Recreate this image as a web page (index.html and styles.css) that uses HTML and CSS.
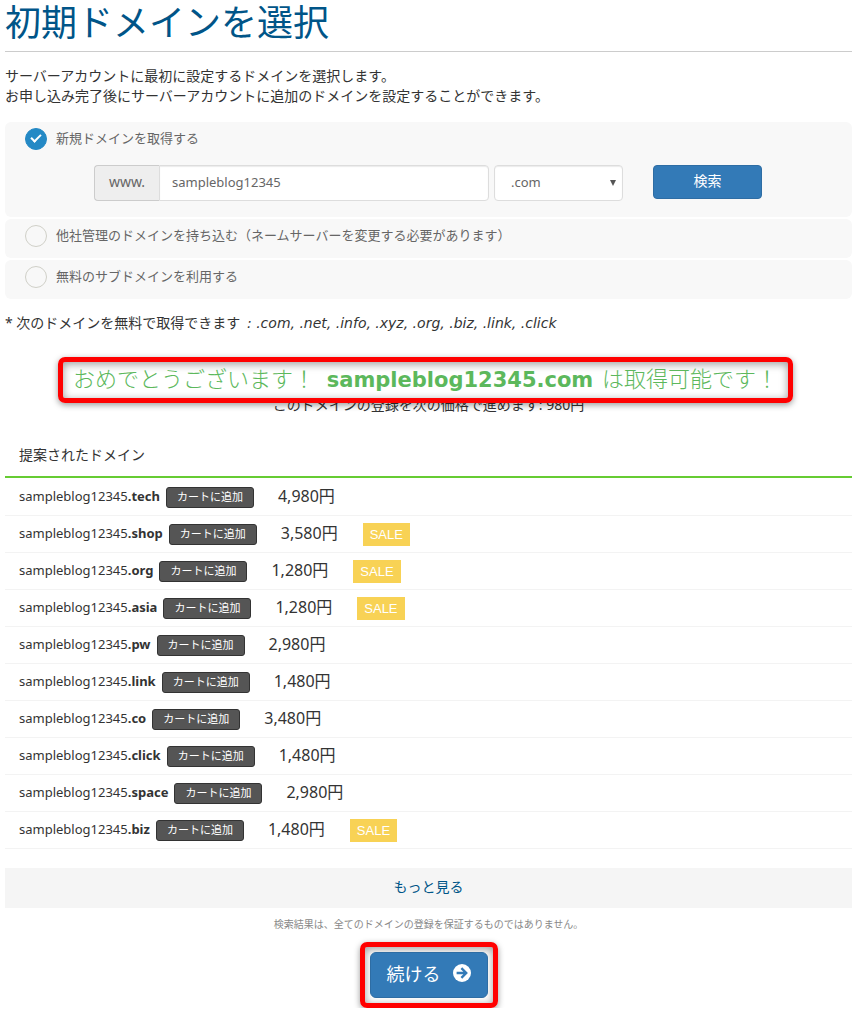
FILE: index.html
```html
<!DOCTYPE html>
<html lang="ja">
<head>
    <meta charset="UTF-8">
    <meta name="viewport" content="width=device-width, initial-scale=1.0">
    <title>初期ドメインを選択</title>
    <link rel="stylesheet" href="styles.css">
</head>
<body>
    <h1>初期ドメインを選択</h1>
    <p class="lead">サーバーアカウントに最初に設定するドメインを選択します。<br>お申し込み完了後にサーバーアカウントに追加のドメインを設定することができます。</p>

    <!-- ドメインの選択 -->
    <form class="options">
        <div class="option">
            <input type="radio" name="domain_option" id="opt_register" checked>
            <label for="opt_register">新規ドメインを取得する</label>
            <div class="search">
                <div class="input-group">
                    <label class="addon" for="domain_name">www.</label>
                    <input type="text" id="domain_name" value="sampleblog12345">
                </div>
                <div class="select-wrap">
                    <select id="domain_tld" aria-label="TLD">
                        <option>.com</option>
                        <option>.net</option>
                        <option>.org</option>
                    </select>
                </div>
                <button type="button" class="btn btn-search">検索</button>
            </div>
        </div>
        <div class="option">
            <input type="radio" name="domain_option" id="opt_own">
            <label for="opt_own">他社管理のドメインを持ち込む（ネームサーバーを変更する必要があります）</label>
        </div>
        <div class="option">
            <input type="radio" name="domain_option" id="opt_sub">
            <label for="opt_sub">無料のサブドメインを利用する</label>
        </div>
    </form>

    <p class="free-note">* 次のドメインを無料で取得できます <em>: .com, .net, .info, .xyz, .org, .biz, .link, .click</em></p>

    <!-- 検索結果 -->
    <div class="result">
        <p class="available"><span class="marked">おめでとうございます！ <strong>sampleblog12345.com</strong> は取得可能です！</span></p>
        <p class="price-note">このドメインの登録を次の価格で進めます: 980円</p>
    </div>

    <h2>提案されたドメイン</h2>
    <ul class="suggestions">
        <li><span class="name">sampleblog12345<b>.tech</b></span><button type="button" class="btn-cart">カートに追加</button><span class="price">4,980円</span></li>
        <li><span class="name">sampleblog12345<b>.shop</b></span><button type="button" class="btn-cart">カートに追加</button><span class="price">3,580円</span><span class="sale">SALE</span></li>
        <li><span class="name">sampleblog12345<b>.org</b></span><button type="button" class="btn-cart">カートに追加</button><span class="price">1,280円</span><span class="sale">SALE</span></li>
        <li><span class="name">sampleblog12345<b>.asia</b></span><button type="button" class="btn-cart">カートに追加</button><span class="price">1,280円</span><span class="sale">SALE</span></li>
        <li><span class="name">sampleblog12345<b>.pw</b></span><button type="button" class="btn-cart">カートに追加</button><span class="price">2,980円</span></li>
        <li><span class="name">sampleblog12345<b>.link</b></span><button type="button" class="btn-cart">カートに追加</button><span class="price">1,480円</span></li>
        <li><span class="name">sampleblog12345<b>.co</b></span><button type="button" class="btn-cart">カートに追加</button><span class="price">3,480円</span></li>
        <li><span class="name">sampleblog12345<b>.click</b></span><button type="button" class="btn-cart">カートに追加</button><span class="price">1,480円</span></li>
        <li><span class="name">sampleblog12345<b>.space</b></span><button type="button" class="btn-cart">カートに追加</button><span class="price">2,980円</span></li>
        <li><span class="name">sampleblog12345<b>.biz</b></span><button type="button" class="btn-cart">カートに追加</button><span class="price">1,480円</span><span class="sale">SALE</span></li>
    </ul>

    <a class="more" href="#">もっと見る</a>
    <p class="disclaimer">検索結果は、全てのドメインの登録を保証するものではありません。</p>

    <div class="actions">
        <div class="marked">
            <button type="button" class="btn btn-next">続ける
                <svg width="18" height="18" viewBox="0 0 18 18" aria-hidden="true">
                    <circle cx="9" cy="9" r="9" fill="#fff"/>
                    <path d="M3.6 9H13M8.4 4.2L13.2 9L8.4 13.8" fill="none" stroke="#337ab7" stroke-width="2.4"/>
                </svg>
            </button>
        </div>
    </div>
</body>
</html>
```
FILE: styles.css
```css
* {
    box-sizing: border-box;
}

body {
    margin: 0;
    padding: 0 7px 0 5px;
    background-color: #fff;
    color: #333;
    font-family: "Noto Sans", "Noto Sans CJK JP", sans-serif;
    font-size: 14px;
    line-height: 20px;
}

p, h1, h2, ul {
    margin: 0;
    padding: 0;
    font-weight: normal;
}

button, input, select {
    font-family: inherit;
    margin: 0;
}

h1 {
    padding-bottom: 6px;
    border-bottom: 1px solid #ccc;
    color: #058;
    font-size: 36px;
    line-height: 45px;
}

.lead {
    margin: 14px 0 16px;
}

/* ドメインの選択 */
.options {
    display: flex;
    flex-direction: column;
    gap: 2px;
}

.option {
    display: grid;
    grid-template-columns: 22px 1fr;
    column-gap: 9px;
    padding: 6px 0 11px 20px;
    border-radius: 6px;
    background-color: #f8f8f8;
    color: #666;
    font-size: 13px;
}

input[type="radio"] {
    display: flex;
    appearance: none;
    width: 22px;
    height: 22px;
    border: 1px solid #d0d0c8;
    border-radius: 50%;
}

input[type="radio"]:checked {
    border-color: #2489c5;
    background-color: #2489c5;
}

input[type="radio"]:checked::before {
    content: "";
    width: 8px;
    height: 4px;
    margin: 5px;
    border: solid #fff;
    border-width: 0 0 2px 2px;
    transform: rotate(-45deg);
}

.search {
    display: flex;
    grid-column: 1 / -1;
    align-items: flex-start;
    padding: 15px 90px 5px 69px;
}

.input-group {
    display: flex;
    flex: 1;
    min-width: 0;
}

.addon {
    width: 65px;
    padding: 6px 0 8px;
    border: 1px solid #ccc;
    border-right: 0;
    border-radius: 4px 0 0 4px;
    background-color: #eee;
    font-size: 14px;
    text-align: center;
}

input[type="text"],
select {
    height: 36px;
    border: 1px solid #ddd;
    background-color: #fff;
    box-shadow: inset 0 1px 1px rgba(0, 0, 0, 0.08);
    color: #666;
    font-size: 13px;
}

input[type="text"] {
    flex: 1;
    min-width: 0;
    padding: 0 12px 2px;
    border-radius: 0 4px 4px 0;
}

.select-wrap {
    position: relative;
    width: 129px;
    margin: 0 30px 0 5px;
}

.select-wrap::after {
    content: "";
    position: absolute;
    top: 15px;
    right: 7px;
    border: 3px solid transparent;
    border-top: 6px solid #555;
    border-bottom: 0;
}

select {
    appearance: none;
    width: 100%;
    padding: 0 16px 2px;
    border-radius: 4px;
}

.btn {
    border: 1px solid #2e6da4;
    background-color: #337ab7;
    color: #fff;
    cursor: pointer;
}

.btn-search {
    width: 109px;
    height: 34px;
    padding: 0 0 4px;
    border-radius: 4px;
    font-size: 14px;
}

.free-note {
    margin: 14px 0 24px;
}

.free-note em {
    margin-left: 3px;
    font-family: "DejaVu Sans", sans-serif;
}

/* 検索結果 */
.result {
    display: flex;
    flex-direction: column;
    align-items: center;
}

.marked {
    border: 5px solid #f00;
    border-radius: 7px;
    box-shadow: 0 2px 6px rgba(0, 0, 0, 0.4), inset 0 2px 8px rgba(0, 0, 0, 0.4);
}

.available {
    position: relative;
    z-index: 1;
    margin-right: 6px;
    color: #5cb85c;
    font-size: 22px;
    font-weight: 300;
    line-height: 32px;
    white-space: nowrap;
}

.available .marked {
    display: block;
    padding: 0 10px 2px;
}

.available strong {
    margin: 0 3px 0 6px;
    font-family: "DejaVu Sans", sans-serif;
    font-size: 21px;
    font-weight: bold;
}

.price-note {
    margin-top: -8px;
}

h2 {
    margin: 30px 0 1px;
    padding: 0 14px 11px;
    border-bottom: 2px solid #6c3;
    font-size: 14px;
}

.suggestions {
    list-style: none;
}

.suggestions li {
    display: flex;
    align-items: center;
    height: 37px;
    padding: 0 0 2px 14px;
    border-bottom: 1px solid #f3f3f3;
    font-size: 13px;
}

.btn-cart {
    width: 88px;
    height: 21px;
    margin: 2px 24px 0 6px;
    padding: 0;
    border: 1px solid #333;
    border-radius: 3px;
    background-color: #555;
    color: #fff;
    font-size: 11px;
    line-height: 18px;
    cursor: pointer;
}

.price {
    font-size: 16px;
}

.sale {
    margin: 2px 0 0 25px;
    padding: 0 7px;
    background-color: #f8d255;
    color: #fff;
    font-family: "Liberation Sans", sans-serif;
    line-height: 23px;
}

.more {
    display: block;
    margin: 19px 0 6px;
    padding: 9px 0 11px;
    background-color: #f5f5f5;
    color: #058;
    text-align: center;
    text-decoration: none;
}

.disclaimer {
    color: #888;
    font-size: 10px;
    text-align: center;
}

.actions {
    display: flex;
    justify-content: center;
    margin-top: 8px;
}

.actions .marked {
    padding: 5px;
}

.btn-next {
    display: flex;
    align-items: center;
    gap: 12px;
    height: 46px;
    padding: 0 16px 4px;
    border-radius: 6px;
    font-size: 18px;
}
```
